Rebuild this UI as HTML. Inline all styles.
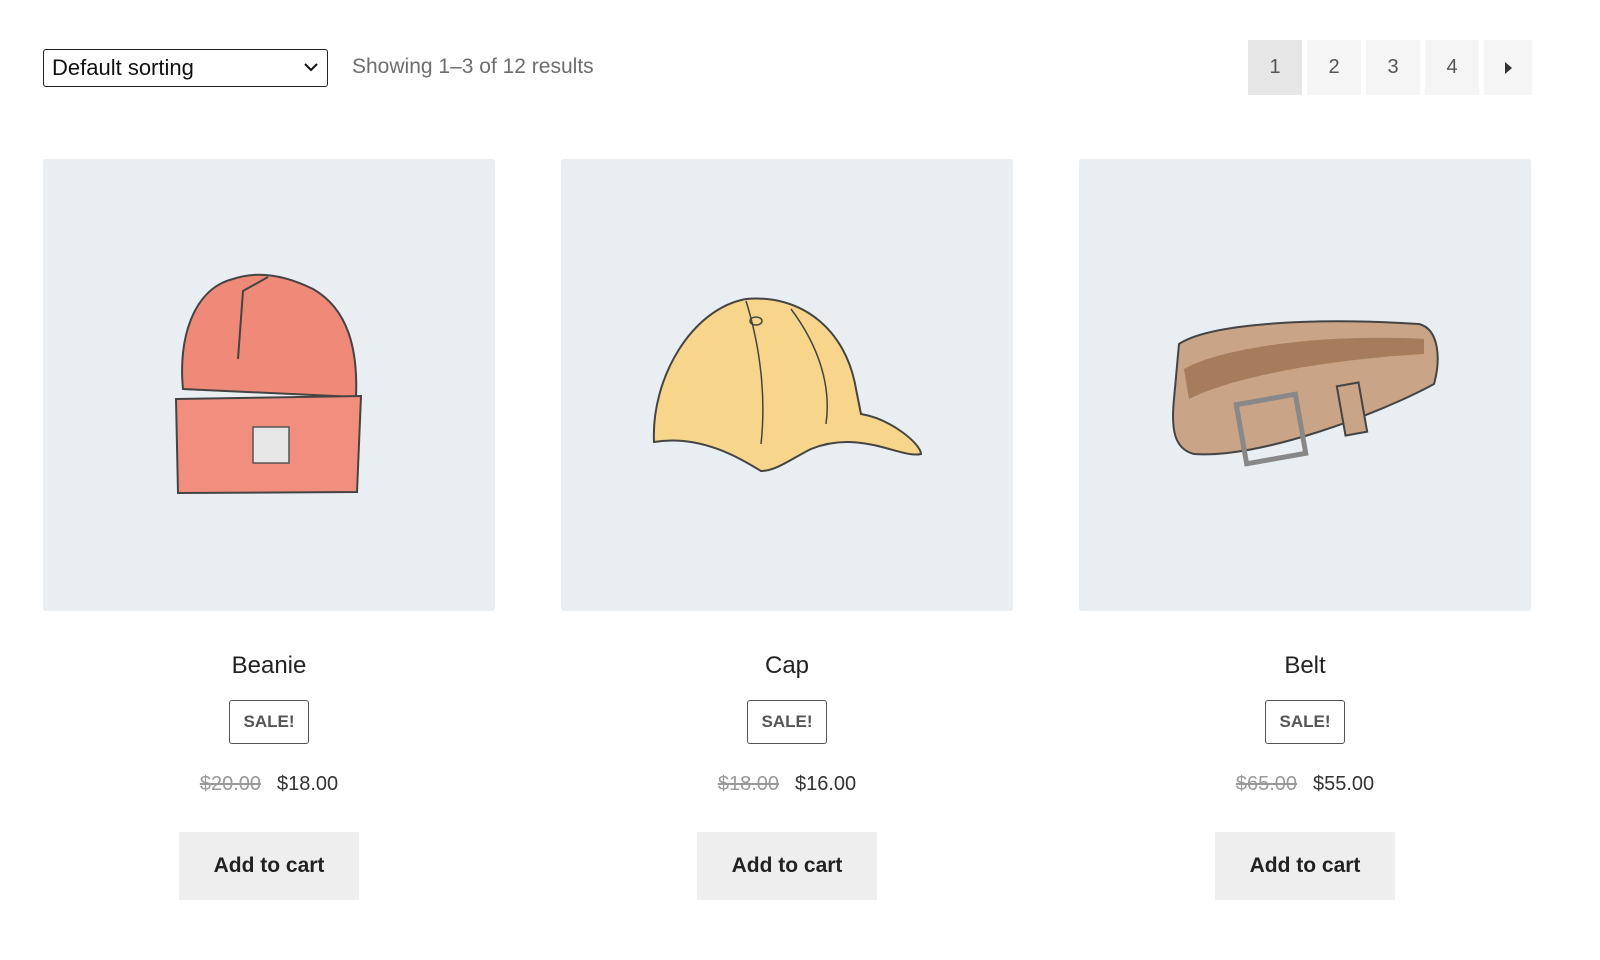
<!DOCTYPE html>
<html><head><meta charset="utf-8"><style>
*{margin:0;padding:0;box-sizing:border-box}
body{width:1600px;height:960px;background:#fff;font-family:"Liberation Sans",sans-serif;color:#333;position:relative;overflow:hidden}
.sel{position:absolute;left:43px;top:49px;width:285px;height:38px;border:1.5px solid #222;border-radius:3px;font-size:22px;color:#111;padding:5px 8px;line-height:26px}
.sel svg{position:absolute;right:8px;top:12px}
.res{position:absolute;left:352px;top:55px;font-size:21px;color:#6d6d6d}
.pg{position:absolute;top:40px;height:55px;background:#f5f5f5;font-size:20px;color:#555;text-align:center;line-height:55px}
.card{position:absolute;top:159px;width:452px;height:452px;background:#e9eef2;border-radius:3px}
.t{position:absolute;width:452px;text-align:center;top:652px;font-size:24px;color:#222}
.sale{position:absolute;top:700px;width:80px;height:44px;border:1.5px solid #555;border-radius:3px;text-align:center;line-height:41px;font-weight:bold;font-size:17px;color:#555}
.pr{position:absolute;top:773px;width:452px;text-align:center;font-size:20px;color:#333}
.pr s{color:#999;margin-right:16px}
.btn{position:absolute;top:832px;width:180px;height:68px;background:#eee;text-align:center;line-height:68px;font-weight:bold;font-size:21px;color:#222}
</style></head><body>
<div class="sel">Default sorting<svg width="16" height="10" viewBox="0 0 16 10"><path d="M2 2l6 6 6-6" fill="none" stroke="#111" stroke-width="2"/></svg></div>
<div class="res">Showing 1–3 of 12 results</div>
<div class="pg" style="left:1248px;width:54px;background:#e6e6e6">1</div>
<div class="pg" style="left:1307px;width:54px">2</div>
<div class="pg" style="left:1366px;width:54px">3</div>
<div class="pg" style="left:1425px;width:54px">4</div>
<div class="pg" style="left:1484px;width:48px"><svg width="10" height="14" viewBox="0 0 10 14" style="vertical-align:middle"><path d="M2 1l7 6-7 6z" fill="#333"/></svg></div>

<div class="card" style="left:43px"><svg width="452" height="452">
<path d="M140 230 C135 180 150 130 190 120 Q225 108 270 130 C305 150 315 190 313 238 Z" fill="#f08a78" stroke="#444" stroke-width="2"/>
<path d="M195 200 L200 132 L225 118" fill="none" stroke="#444" stroke-width="2"/>
<path d="M133 240 L318 237 L314 333 L135 334 Z" fill="#f28e7e" stroke="#444" stroke-width="2"/>
<rect x="210" y="268" width="36" height="36" fill="#e6e6e6" stroke="#555" stroke-width="1.5"/></svg></div>
<div class="card" style="left:561px"><svg width="452" height="452">
<path d="M93 283 C90 220 130 150 185 140 C240 135 285 170 295 230 L300 255 C330 260 360 285 360 295 C340 300 300 270 250 290 C230 300 215 312 200 312 C180 300 140 275 93 283Z" fill="#f7d68b" stroke="#444" stroke-width="2"/>
<path d="M185 142 C200 190 205 240 200 285 M230 150 C260 190 270 230 265 265" fill="none" stroke="#444" stroke-width="1.5"/>
<ellipse cx="195" cy="162" rx="6" ry="4" fill="none" stroke="#444" stroke-width="1.5"/></svg></div>
<div class="card" style="left:1079px"><svg width="452" height="452">
<path d="M100 185 C130 165 230 158 340 165 C360 170 362 200 355 225 C300 255 180 300 115 295 C95 290 92 270 95 240 Z" fill="#c9a487" stroke="#444" stroke-width="2"/>
<path d="M105 210 C150 185 260 175 345 180 L345 195 C260 200 160 215 110 240 Z" fill="#a77c5c"/>
<rect x="162" y="240" width="60" height="60" fill="none" stroke="#888" stroke-width="5" transform="rotate(-10 192 270)"/>
<rect x="262" y="225" width="22" height="50" fill="#c9a487" stroke="#444" stroke-width="2" transform="rotate(-10 273 250)"/></svg></div>

<div class="t" style="left:43px">Beanie</div><div class="sale" style="left:229px">SALE!</div>
<div class="pr" style="left:43px"><s>$20.00</s>$18.00</div><div class="btn" style="left:179px">Add to cart</div>
<div class="t" style="left:561px">Cap</div><div class="sale" style="left:747px">SALE!</div>
<div class="pr" style="left:561px"><s>$18.00</s>$16.00</div><div class="btn" style="left:697px">Add to cart</div>
<div class="t" style="left:1079px">Belt</div><div class="sale" style="left:1265px">SALE!</div>
<div class="pr" style="left:1079px"><s>$65.00</s>$55.00</div><div class="btn" style="left:1215px">Add to cart</div>
</body></html>
